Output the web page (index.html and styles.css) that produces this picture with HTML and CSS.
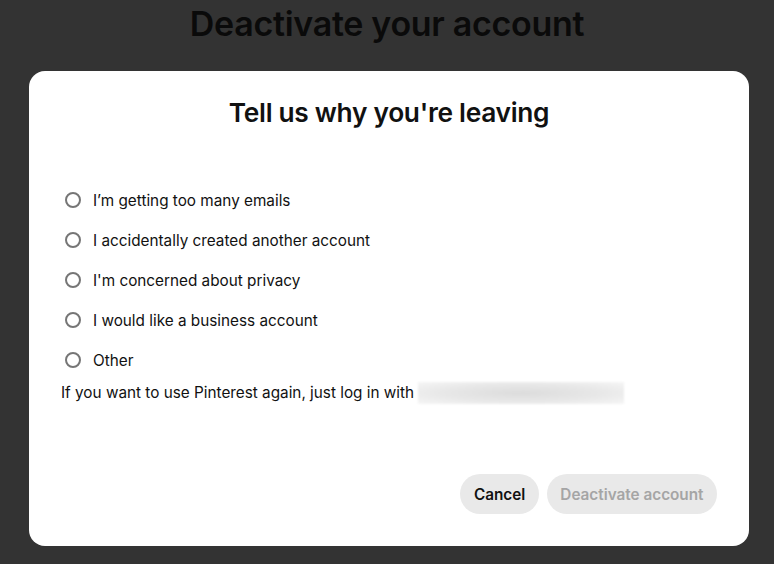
FILE: index.html
```html
<!DOCTYPE html>
<html>
<head>
<meta charset="utf-8">
<link rel="stylesheet" href="styles.css">
</head>
<body>
<h1 class="page-title">Deactivate your account</h1>
<div class="modal">
  <h2 class="modal-title">Tell us why you're leaving</h2>
  <ul class="options">
    <li class="option"><span class="radio"></span><span>I’m getting too many emails</span></li>
    <li class="option"><span class="radio"></span><span>I accidentally created another account</span></li>
    <li class="option"><span class="radio"></span><span>I'm concerned about privacy</span></li>
    <li class="option"><span class="radio"></span><span>I would like a business account</span></li>
    <li class="option"><span class="radio"></span><span>Other</span></li>
  </ul>
  <p class="info">If you want to use Pinterest again, just log in with <span class="blur"></span></p>
  <div class="actions">
    <button class="btn">Cancel</button>
    <button class="btn btn-disabled">Deactivate account</button>
  </div>
</div>
</body>
</html>
```
FILE: styles.css
```css
* { box-sizing: border-box; }
html, body { margin: 0; padding: 0; }
body {
  background: #333333;
  font-family: Inter, "Noto Sans", sans-serif;
  color: #111111;
  width: 774px;
  height: 564px;
  overflow: hidden;
}
.page-title {
  margin: 0;
  height: 71px;
  padding-top: 2px;
  text-align: center;
  font-size: 34px;
  font-weight: 600;
  line-height: 44px;
  color: #0a0a0a;
  letter-spacing: -0.3px;
}
.modal {
  margin: 0 25px 0 29px;
  background: #ffffff;
  border-radius: 16px;
  height: 475px;
  padding: 24px 32px 32px 32px;
  display: flex;
  flex-direction: column;
}
.modal-title {
  margin: 0;
  text-align: center;
  font-size: 26.3px;
  font-weight: 600;
  line-height: 36px;
  letter-spacing: -0.3px;
}
.options {
  list-style: none;
  margin: 57px 0 0 0;
  padding: 0;
  display: flex;
  flex-direction: column;
  gap: 16px;
}
.option {
  display: flex;
  align-items: center;
  height: 24px;
  font-size: 15.3px;
  gap: 12px;
  padding-left: 4px;
}
.radio {
  width: 16px;
  height: 16px;
  border: 2px solid #767676;
  border-radius: 50%;
  flex: none;
}
.info {
  margin: 10px 0 0 0;
  font-size: 15.3px;
  line-height: 22px;
  display: flex;
  align-items: center;
  white-space: pre;
}
.blur {
  display: inline-block;
  width: 206px;
  height: 22px;
  background: radial-gradient(ellipse at center, #dcdcdc 0%, #e8e8e8 55%, #f6f6f6 100%);
  filter: blur(1px);
}
.actions {
  margin-top: auto;
  display: flex;
  justify-content: flex-end;
  gap: 8px;
}
.btn {
  font-family: inherit;
  height: 40px;
  border: none;
  border-radius: 20px;
  background: #e9e9e9;
  color: #111111;
  font-size: 15.3px;
  font-weight: 600;
  padding: 0 13.5px;
}
.btn-disabled {
  color: #a5a5a5;
}
```
